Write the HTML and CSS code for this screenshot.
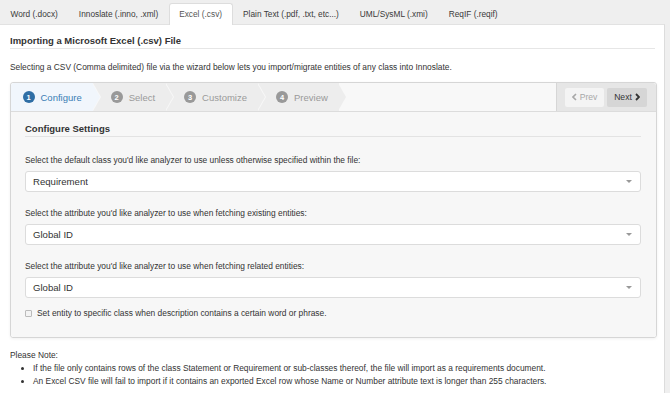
FILE: index.html
```
<!DOCTYPE html>
<html>
<head>
<meta charset="utf-8">
<link rel="stylesheet" href="styles.css">
</head>
<body>
<div class="tabs">
  <div class="tab">Word (.docx)</div>
  <div class="tab">Innoslate (.inno, .xml)</div>
  <div class="tab active">Excel (.csv)</div>
  <div class="tab">Plain Text (.pdf, .txt, etc...)</div>
  <div class="tab">UML/SysML (.xmi)</div>
  <div class="tab">ReqIF (.reqif)</div>
</div>
<div class="panel">
  <h1 class="title">Importing a Microsoft Excel (.csv) File</h1>
  <p class="desc">Selecting a CSV (Comma delimited) file via the wizard below lets you import/migrate entities of any class into Innoslate.</p>
  <div class="wizard">
    <div class="wiz-head">
      <ul class="steps">
        <li class="step active"><span class="badge">1</span>Configure</li>
        <li class="step"><span class="badge">2</span>Select</li>
        <li class="step"><span class="badge">3</span>Customize</li>
        <li class="step"><span class="badge">4</span>Preview</li>
      </ul>
      <div class="spacer"></div>
      <div class="actions">
        <button class="btn prev"><svg class="chev" width="5" height="8" viewBox="0 0 5 8"><polyline points="4,1 1,4 4,7" fill="none" stroke="currentColor" stroke-width="1.6"/></svg>Prev</button>
        <button class="btn next">Next<svg class="chev" width="5" height="8" viewBox="0 0 5 8"><polyline points="1,1 4,4 1,7" fill="none" stroke="currentColor" stroke-width="1.8"/></svg></button>
      </div>
    </div>
    <div class="wiz-body">
      <h2 class="section">Configure Settings</h2>
      <div class="field">
        <div class="label">Select the default class you'd like analyzer to use unless otherwise specified within the file:</div>
        <div class="select">Requirement<span class="caret"></span></div>
      </div>
      <div class="field">
        <div class="label">Select the attribute you'd like analyzer to use when fetching existing entities:</div>
        <div class="select">Global ID<span class="caret"></span></div>
      </div>
      <div class="field">
        <div class="label">Select the attribute you'd like analyzer to use when fetching related entities:</div>
        <div class="select">Global ID<span class="caret"></span></div>
      </div>
      <label class="check"><span class="box"></span>Set entity to specific class when description contains a certain word or phrase.</label>
    </div>
  </div>
  <div class="note">
    <div>Please Note:</div>
    <ul class="bullets">
      <li>If the file only contains rows of the class Statement or Requirement or sub-classes thereof, the file will import as a requirements document.</li>
      <li>An Excel CSV file will fail to import if it contains an exported Excel row whose Name or Number attribute text is longer than 255 characters.</li>
    </ul>
  </div>
</div>
</body>
</html>
```
FILE: styles.css
```
* { box-sizing: border-box; }
html, body { margin: 0; padding: 0; }
body {
  background: #efefef;
  font-family: "Liberation Sans", Arial, sans-serif;
  color: #333;
  width: 670px;
  height: 393px;
  overflow: hidden;
}
.tabs {
  display: flex;
  height: 24px;
  align-items: flex-end;
}
.tab {
  height: 21px;
  padding: 0 9.5px;
  font-size: 8.3px;
  line-height: 20px;
  color: #3a3a3a;
  border: 1px solid transparent;
  border-bottom: none;
}
.tab.active {
  background: #fff;
  border-color: #ddd;
  border-radius: 3px 3px 0 0;
  color: #555;
  height: 22px;
  margin-bottom: -1px;
}
.panel {
  background: #fff;
  width: 665px;
  height: 369px;
  border-top: 1px solid #e2e2e2;
  border-right: 1px solid #dcdcdc;
  padding: 0 9px 0 10px;
}
.title {
  margin: 10px 0 0;
  font-size: 9.5px;
  font-weight: bold;
  line-height: 12px;
  padding-bottom: 1px;
  border-bottom: 1px solid #e6e6e6;
}
.desc {
  margin: 12px 0 0;
  font-size: 8.4px;
  line-height: 12px;
}
.wizard {
  margin-top: 9px;
  border: 1px solid #d6d6d6;
  border-radius: 3px;
  box-shadow: 0 1px 3px rgba(0,0,0,.06);
  width: 647px;
}
.wiz-head {
  display: flex;
  height: 29px;
  border-bottom: 1px solid #dcdcdc;
  border-radius: 3px 3px 0 0;
  overflow: hidden;
}
.steps {
  display: flex;
  margin: 0;
  padding: 0;
  list-style: none;
}
.step {
  position: relative;
  display: flex;
  align-items: center;
  height: 28px;
  padding: 0 11px 0 18px;
  background: #ededed;
  color: #9a9a9a;
  font-size: 9.5px;
}
.step:first-child { padding-left: 11.5px; }
.step::before, .step::after {
  content: "";
  position: absolute;
  top: 0;
  border-top: 14px solid transparent;
  border-bottom: 14px solid transparent;
  border-left: 8px solid #f8f8f8;
}
.step::before { right: -8px; z-index: 2; }
.step::after { right: -7px; z-index: 3; border-left-color: #ededed; }
.step.active { background: #f1f6fc; color: #3a7db5; }
.step.active::after { border-left-color: #f1f6fc; }
.badge {
  width: 12px;
  height: 12px;
  border-radius: 50%;
  background: #999;
  color: #fff;
  font-size: 7.5px;
  font-weight: bold;
  display: flex;
  align-items: center;
  justify-content: center;
  margin-right: 6px;
}
.step.active .badge { background: #2f6ea5; }
.spacer { flex: 1; background: #f8f8f8; }
.actions {
  display: flex;
  align-items: center;
  gap: 3px;
  padding: 0 9px 0 8px;
  background: #e6e6e6;
  border-left: 1px solid #d6d6d6;
}
.btn {
  height: 19px;
  border: none;
  border-radius: 2px;
  font-family: inherit;
  font-size: 8.6px;
  display: flex;
  align-items: center;
  justify-content: center;
  gap: 3px;
  padding: 0;
}
.btn.prev { width: 39px; background: #f4f4f4; color: #a8a8a8; }
.btn.next { width: 40px; background: #d6d6d6; color: #333; }
.wiz-body {
  background: #f7f7f7;
  padding: 11px 15px 18px 14px;
  border-radius: 0 0 3px 3px;
}
.section {
  margin: 0;
  font-size: 9.5px;
  font-weight: bold;
  line-height: 12px;
  padding-bottom: 1px;
  border-bottom: 1px solid #e3e3e3;
}
.field { margin-bottom: 16px; }
.field:first-of-type { margin-top: 18px; }
.label {
  font-size: 8.4px;
  line-height: 11px;
  margin-bottom: 5px;
}
.select {
  position: relative;
  height: 21px;
  background: #fff;
  border: 1px solid #dcdcdc;
  border-radius: 3px;
  padding-left: 7px;
  font-size: 9.6px;
  display: flex;
  align-items: center;
}
.caret {
  position: absolute;
  right: 8px;
  top: 8px;
  border-left: 3px solid transparent;
  border-right: 3px solid transparent;
  border-top: 3px solid #999;
}
.check {
  display: flex;
  align-items: center;
  font-size: 8.4px;
  line-height: 11px;
  margin-top: -6px;
}
.box {
  width: 7px;
  height: 7px;
  border: 1px solid #bbb;
  border-radius: 1px;
  background: #f3f3f3;
  margin-right: 5px;
}
.note {
  margin-top: 11px;
  font-size: 8.4px;
  line-height: 13px;
}
.bullets {
  margin: 0;
  padding-left: 23px;
}
.bullets li { list-style: disc; }
```
